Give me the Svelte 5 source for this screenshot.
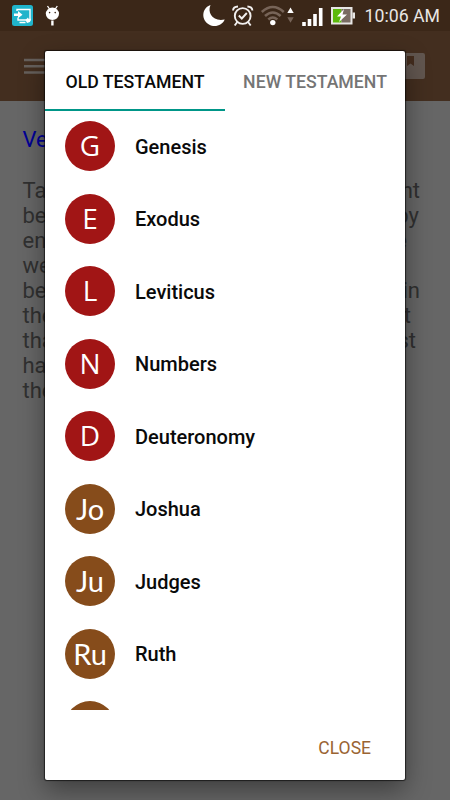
<script>
  let tab = 'old';

  const books = [
    { short: 'G', name: 'Genesis', group: 'law' },
    { short: 'E', name: 'Exodus', group: 'law' },
    { short: 'L', name: 'Leviticus', group: 'law' },
    { short: 'N', name: 'Numbers', group: 'law' },
    { short: 'D', name: 'Deuteronomy', group: 'law' },
    { short: 'Jo', name: 'Joshua', group: 'history' },
    { short: 'Ju', name: 'Judges', group: 'history' },
    { short: 'Ru', name: 'Ruth', group: 'history' },
    { short: '', name: '', group: 'history' }
  ];

  // text left and right of the dialog, with the gap after each line
  const lines = [
    { start: 'Ta', end: 'ht', gap: 30 },
    { start: 'be', end: 'by', gap: 31 },
    { start: 'en', end: 'e', gap: 43 },
    { start: 'we', end: '', gap: 30 },
    { start: 'be', end: 'in', gap: 30 },
    { start: 'the', end: 't', gap: 39 },
    { start: 'tha', end: 'st', gap: 34 },
    { start: 'ha', end: '', gap: 30 },
    { start: 'the', end: '', gap: 30 }
  ];
</script>

<div class="screen">
  <div class="status-bar">
    <svg class="notifications" width="60" height="31" viewBox="0 0 60 31">
      <rect x="2" y="5" width="21" height="21" rx="2.5" fill="#20b4cb" />
      <path d="M7 11V9.500h13V20H8v-2.500M9.500 22.500h6" fill="none" stroke="#fff" stroke-width="1.400" />
      <path d="M4 13.500h4V11l4.500 3.700L8 18.300V16H4z" fill="#fff" />
      <path d="M15.500 20l2.500-2.500 1 2 2-1-1 3.500-3 1z" fill="#fff" />
      <path d="M37.500 6l2 3M47.300 6l-2 3" stroke="#fff" stroke-width="1.300" />
      <ellipse cx="42.400" cy="13.800" rx="6.600" ry="6.200" fill="#fff" />
      <circle cx="39.600" cy="12.600" r=".8" fill="#3c2618" />
      <circle cx="45.200" cy="12.600" r=".8" fill="#3c2618" />
      <path d="M42.400 20.500v5" stroke="#fff" stroke-width="2.400" />
    </svg>
    <svg class="system" width="164" height="31" viewBox="0 0 164 31">
      <path d="M15.500 5C6.500 8 6 20 14 24.500C20 28 27.500 25 29.700 19.500C18 22 12 13 15.500 5z" fill="#fff" />
      <g fill="none" stroke="#f2f0ef" stroke-width="1.900">
        <circle cx="47.700" cy="16" r="7.900" />
        <path d="M38 10.500q.3-3.800 5-4M57.400 10.500q-.3-3.800-5-4M42.300 22l-2.600 3.500M53.100 22l2.600 3.500" />
        <path d="M43.800 15.500l3 3 5-5.500" />
      </g>
      <g fill="none" stroke="#776458" stroke-width="2.600">
        <path d="M66.800 12q11-10 22 0M70 16q7.800-7 15.600 0M73.300 19.500q4.500-4 9 0" />
      </g>
      <circle cx="77.800" cy="22.600" r="2.700" fill="#fff" />
      <path d="M92.300 13l3.200-5.500 3.200 5.500z" fill="#fff" />
      <path d="M92.300 17.300l3.200 5.500 3.200-5.500z" fill="#776458" />
      <path d="M109 22v4M114.500 19v7M120 14v12M125.700 8v18" stroke="#fff" stroke-width="3.600" />
      <rect x="136" y="7" width="21.500" height="17.500" fill="#e8e6e4" />
      <rect x="138" y="9" width="8.500" height="13.500" fill="#5cb90b" />
      <rect x="146.500" y="9" width="9" height="13.500" fill="#796b62" />
      <rect x="157.500" y="12.500" width="2.500" height="6" fill="#e8e6e4" />
      <path d="M149 9l-7 7.500h4l-2 5.500 8-7.500h-4.500z" fill="#fff" />
    </svg>
    <span class="clock">10:06 AM</span>
  </div>

  <div class="app-bar">
    <svg width="26" height="20" viewBox="0 0 26 20">
      <path d="M0 4h26M0 10.200h26M0 16.400h26" stroke="#66605c" stroke-width="2.500" />
    </svg>
    <svg width="30" height="26" viewBox="0 0 30 26">
      <rect width="30" height="26" rx="2" fill="#61564f" />
      <path d="M12 3h7v10l-3.500-2.500L12 13z" fill="#432c1d" />
    </svg>
  </div>

  <div class="article">
    <div class="verse">Ve</div>
    {#each lines as line}
      <div class="line" style="padding-right: {line.gap}px">
        <span>{line.start}</span>
        <span>{line.end}</span>
      </div>
    {/each}
  </div>

  <div class="dialog">
    <div class="tabs">
      <button class="tab" class:active={tab === 'old'} on:click={() => (tab = 'old')}>OLD TESTAMENT</button>
      <button class="tab" class:active={tab === 'new'} on:click={() => (tab = 'new')}>NEW TESTAMENT</button>
    </div>

    <div class="books">
      {#each books as book}
        <div class="book">
          <div class="badge {book.group}">{book.short}</div>
          <div class="name">{book.name}</div>
        </div>
      {/each}
    </div>

    <div class="actions">
      <button class="close">CLOSE</button>
    </div>
  </div>
</div>

<style>
  .screen {
    position: relative;
    width: 450px;
    height: 800px;
    overflow: hidden;
    background: #666;
    font-family: Roboto, sans-serif;
  }

  .status-bar {
    display: flex;
    align-items: center;
    height: 31px;
    padding: 0 10px;
    background: #3b2718;
  }

  .notifications,
  .system {
    flex: none;
  }

  .system {
    margin-left: 125px;
  }

  .clock {
    margin-left: auto;
    padding-top: 2px;
    font-size: 17.7px;
    line-height: 29px;
    white-space: nowrap;
    color: #e9e6e4;
  }

  .app-bar {
    display: flex;
    align-items: center;
    justify-content: space-between;
    box-sizing: border-box;
    height: 70px;
    padding: 0 25px 0 24px;
    background: #432e1f;
  }

  .article {
    padding-left: 22.5px;
    font-size: 22px;
    line-height: 25px;
    color: #303030;
  }

  .verse {
    padding: 26px 0;
    color: #000096;
  }

  .line {
    display: flex;
    justify-content: space-between;
    height: 25px;
  }

  .dialog {
    position: absolute;
    top: 51px;
    left: 45px;
    display: flex;
    flex-direction: column;
    width: 360px;
    height: 729px;
    border-radius: 2px;
    background: #fff;
    box-shadow: 0 0 1px 1px rgba(0, 0, 0, 0.6), 0 10px 26px rgba(0, 0, 0, 0.4);
  }

  button {
    padding: 0;
    border: none;
    background: none;
    font-family: inherit;
    cursor: pointer;
  }

  .tabs {
    display: flex;
    height: 60px;
  }

  .tab {
    flex: 1;
    box-sizing: border-box;
    padding-top: 4px;
    border-bottom: 2px solid transparent;
    font-size: 17.7px;
    font-weight: 500;
    white-space: nowrap;
    color: #757575;
  }

  .tab.active {
    border-color: #009688;
    color: #0a0a0a;
  }

  .books {
    height: 599px;
    overflow: hidden;
  }

  .book {
    display: flex;
    align-items: center;
    box-sizing: border-box;
    height: 72.5px;
    padding: 0 20px 2px;
  }

  .badge {
    flex: none;
    width: 50px;
    height: 50px;
    border-radius: 50%;
    font-family: "Open Sans", sans-serif;
    font-size: 28px;
    line-height: 49px;
    text-align: center;
    color: #fff;
  }

  .law {
    background: #a11515;
  }

  .history {
    background: #864c1b;
    font-family: Lato, sans-serif;
    font-size: 29px;
  }

  .name {
    margin-left: 20px;
    padding-top: 1px;
    font-size: 20px;
    font-weight: 500;
    color: #0a0a0a;
  }

  .actions {
    display: flex;
    justify-content: flex-end;
    padding: 26px 34px 0 0;
  }

  .close {
    font-size: 17.5px;
    line-height: 24px;
    color: #9a6432;
  }
</style>
